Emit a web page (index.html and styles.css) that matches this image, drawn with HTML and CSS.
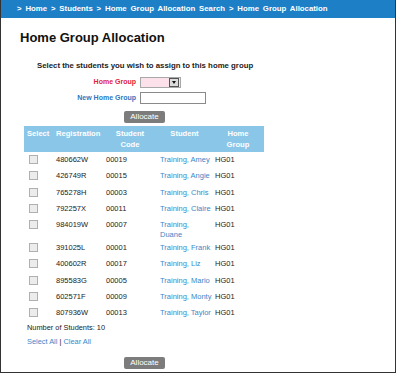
FILE: index.html
```html
<!DOCTYPE html>
<html>
<head>
<meta charset="utf-8">
<link rel="stylesheet" href="styles.css">
</head>
<body>
<div class="frame">
  <div class="crumbs">&gt; Home &gt; Students &gt; Home Group Allocation Search &gt; Home Group Allocation</div>
  <h1 class="title">Home Group Allocation</h1>
  <p class="instr">Select the students you wish to assign to this home group</p>
  <div class="fields">
    <label class="lbl red">Home Group</label>
    <div class="select"><span class="arrow"><span class="tri"></span></span></div>
    <label class="lbl blue">New Home Group</label>
    <div class="input"></div>
  </div>
  <div class="btnrow"><span class="btn">Allocate</span></div>
  <table class="grid">
    <thead>
      <tr>
        <th class="c1 left">Select</th>
        <th class="c2 left">Registration</th>
        <th class="c3">Student<br>Code</th>
        <th class="c4">Student</th>
        <th class="c5">Home<br>Group</th>
      </tr>
    </thead>
    <tbody>
      <tr><td><span class="cb"></span></td><td>480662W</td><td>00019</td><td><a>Training, Amey</a></td><td>HG01</td></tr>
      <tr><td><span class="cb"></span></td><td>426749R</td><td>00015</td><td><a>Training, Angie</a></td><td>HG01</td></tr>
      <tr><td><span class="cb"></span></td><td>765278H</td><td>00003</td><td><a>Training, Chris</a></td><td>HG01</td></tr>
      <tr><td><span class="cb"></span></td><td>792257X</td><td>00011</td><td><a>Training, Claire</a></td><td>HG01</td></tr>
      <tr><td><span class="cb"></span></td><td>984019W</td><td>00007</td><td><a>Training,<br>Duane</a></td><td>HG01</td></tr>
      <tr><td><span class="cb"></span></td><td>391025L</td><td>00001</td><td><a>Training, Frank</a></td><td>HG01</td></tr>
      <tr><td><span class="cb"></span></td><td>400602R</td><td>00017</td><td><a>Training, Liz</a></td><td>HG01</td></tr>
      <tr><td><span class="cb"></span></td><td>895583G</td><td>00005</td><td><a>Training, Mario</a></td><td>HG01</td></tr>
      <tr><td><span class="cb"></span></td><td>602571F</td><td>00009</td><td><a>Training, Monty</a></td><td>HG01</td></tr>
      <tr><td><span class="cb"></span></td><td>807936W</td><td>00013</td><td><a>Training, Taylor</a></td><td>HG01</td></tr>
    </tbody>
  </table>
  <p class="count">Number of Students: 10</p>
  <p class="sel"><a>Select All</a> | <a>Clear All</a></p>
  <div class="btnrow bottom"><span class="btn">Allocate</span></div>
</div>
</body>
</html>
```

FILE: styles.css
```css
html, body {
  margin: 0;
  padding: 0;
  background: #fff;
}
body {
  font-family: "Liberation Sans", Arial, sans-serif;
  color: #222;
}
.frame {
  width: 396px;
  height: 373px;
  box-sizing: border-box;
  border-left: 1px solid #333;
  border-right: 1px solid #333;
  border-bottom: 1px solid #333;
  overflow: hidden;
}
.crumbs {
  height: 18px;
  line-height: 18px;
  background: #1d7fc6;
  color: #fff;
  font-weight: bold;
  font-size: 7.8px;
  padding-left: 16px;
  white-space: pre;
  word-spacing: 1.7px;
}
.title {
  margin: 12px 0 0 19px;
  font-size: 13px;
  line-height: 15px;
  font-weight: bold;
  color: #111;
}
.instr {
  margin: 16px 0 0 36px;
  font-size: 7.8px;
  line-height: 10px;
  font-weight: bold;
  color: #222;
}
.fields {
  display: grid;
  grid-template-columns: 135px auto;
  column-gap: 4px;
  row-gap: 4px;
  margin-top: 5px;
  align-items: center;
}
.lbl {
  text-align: right;
  font-weight: bold;
  font-size: 7px;
  line-height: 12px;
}
.red { color: #e0243f; }
.blue { color: #2b78c0; }
.select {
  width: 41px;
  height: 11px;
  box-sizing: border-box;
  border: 1px solid #a8a8a8;
  background: #fde1ea;
  display: flex;
  justify-content: flex-end;
  align-items: center;
  padding-right: 1px;
}
.arrow {
  width: 10px;
  height: 9px;
  box-sizing: border-box;
  border: 1px solid #555;
  background: #dcdcdc;
  display: flex;
  align-items: center;
  justify-content: center;
}
.tri {
  width: 0;
  height: 0;
  border-left: 2.5px solid transparent;
  border-right: 2.5px solid transparent;
  border-top: 3px solid #111;
}
.input {
  width: 66px;
  height: 12px;
  box-sizing: border-box;
  border: 1px solid #8a8a8a;
  background: #fff;
}
.btnrow {
  display: flex;
  margin-top: 7px;
  padding-left: 123px;
  height: 12px;
}
.btnrow.bottom {
  margin-top: 10px;
}
.btn {
  display: block;
  width: 41px;
  height: 12px;
  line-height: 12px;
  box-sizing: border-box;
  background: #7c7c7c;
  border-radius: 2px;
  color: #fff;
  font-size: 8px;
  text-align: center;
}
.grid {
  margin: 3px 0 0 23px;
  border-collapse: collapse;
  border-spacing: 0;
  table-layout: fixed;
  width: 240px;
}
.grid th {
  box-sizing: border-box;
  background: #89c6e8;
  color: #fff;
  font-weight: bold;
  font-size: 7.6px;
  line-height: 10.5px;
  padding: 3px 0 2px;
  vertical-align: top;
  text-align: center;
}
.grid th.left {
  text-align: left;
  padding-left: 3px;
}
.c1 { width: 29px; }
.c2 { width: 50px; }
.c3 { width: 54px; }
.c4 { width: 55px; }
.c5 { width: 52px; }
.grid tbody tr {
  height: 16.3px;
}
.grid td {
  font-size: 7.5px;
  line-height: 9.5px;
  padding: 3px 0 1px 3px;
  vertical-align: top;
  color: #222;
  white-space: nowrap;
}
.grid td:first-child {
  padding-left: 5px;
}
.cb {
  display: block;
  width: 9px;
  height: 9px;
  box-sizing: border-box;
  border: 1px solid #b0b0b0;
  background: #ececec;
}
a {
  color: #3b87c8;
  text-decoration: none;
}
.count {
  margin: 1px 0 0 26px;
  font-size: 7.4px;
  line-height: 10px;
  color: #222;
}
.sel {
  margin: 4px 0 0 26px;
  font-size: 7.4px;
  line-height: 10px;
  color: #222;
}
```
